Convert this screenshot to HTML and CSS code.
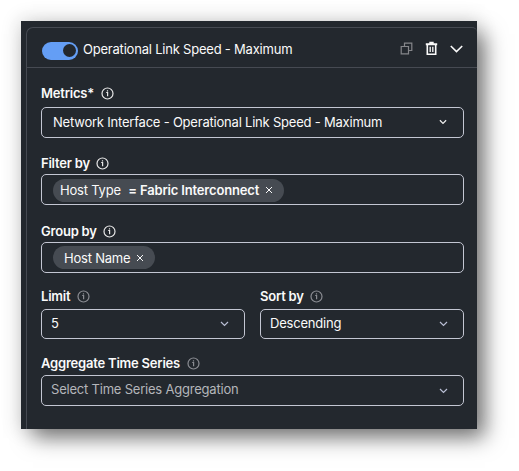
FILE: index.html
```html
<!DOCTYPE html>
<html lang="en">
<head>
<meta charset="utf-8">
<title>Metric query</title>
<link rel="stylesheet" href="styles.css">
</head>
<body>
<svg class="defs" aria-hidden="true">
  <symbol id="info" viewBox="0 0 13 13"><circle cx="6.5" cy="6.5" r="5.5"/><path d="M5.2 5.5h1.4v3.8M6.5 3.2v1.3"/></symbol>
  <symbol id="chevron" viewBox="0 0 9 6"><path d="M1 1l3.5 3.5L8 1"/></symbol>
  <symbol id="close" viewBox="0 0 8 8"><path d="M1 1l6 6M7 1l-6 6"/></symbol>
</svg>
<main class="panel">
  <section class="card">
    <header class="card-header">
      <span class="toggle"><span class="knob"></span></span>
      <h1 class="title">Operational Link Speed - Maximum</h1>
      <svg class="copy" viewBox="0 0 13 13"><path d="M4.5 4V1.2h7.3v7.3H9M1.2 4.5h7.3v7.3H1.2z"/></svg>
      <svg class="trash" viewBox="0 0 13 15"><path class="lid" d="M.8 3.3h11.4M4.3 1.8h4.4"/><path d="M2.3 4v9.2h8.4V4"/><path class="slots" d="M5.2 5.7v5.3M7.8 5.7v5.3"/></svg>
      <svg class="expand" viewBox="0 0 13 8"><path d="M.8 1l5.7 5.6L12.2 1"/></svg>
    </header>
    <form class="fields">
      <div class="field metrics">
        <div class="label"><span>Metrics*</span><svg class="info"><use href="#info"/></svg></div>
        <div class="box wide-pad"><span>Network Interface - Operational Link Speed - Maximum</span><svg class="chevron bright" viewBox="0 0 9 6"><use href="#chevron"/></svg></div>
      </div>
      <div class="field filter">
        <div class="label"><span>Filter by</span><svg class="info"><use href="#info"/></svg></div>
        <div class="box chips"><div class="chip chip-filter"><span>Host Type</span><b class="value">= Fabric Interconnect</b><svg class="close"><use href="#close"/></svg></div></div>
      </div>
      <div class="field group">
        <div class="label"><span>Group by</span><svg class="info"><use href="#info"/></svg></div>
        <div class="box chips"><div class="chip chip-group"><span>Host Name</span><svg class="close"><use href="#close"/></svg></div></div>
      </div>
      <div class="pair">
        <div class="field">
          <div class="label"><span>Limit</span><svg class="info dim"><use href="#info"/></svg></div>
          <div class="box"><span>5</span><svg class="chevron"><use href="#chevron"/></svg></div>
        </div>
        <div class="field">
          <div class="label"><span>Sort by</span><svg class="info dim"><use href="#info"/></svg></div>
          <div class="box"><span>Descending</span><svg class="chevron"><use href="#chevron"/></svg></div>
        </div>
      </div>
      <div class="field aggregate">
        <div class="label"><span>Aggregate Time Series</span><svg class="info dim"><use href="#info"/></svg></div>
        <div class="box placeholder"><span>Select Time Series Aggregation</span><svg class="chevron"><use href="#chevron"/></svg></div>
      </div>
    </form>
  </section>
</main>
</body>
</html>
```
FILE: styles.css
```css
* { box-sizing: border-box; }
body {
  margin: 0;
  padding: 21px;
  height: 471px;
  overflow: hidden;
  background: #fff;
  color: #fafafa;
  font: 13px/16px Inter, "Liberation Sans", sans-serif;
  letter-spacing: -.21px;
}
svg { fill: none; stroke: currentColor; flex: none; }
.defs { position: absolute; width: 0; height: 0; }
.panel {
  width: 456px;
  height: 408px;
  padding: 6px 0 0 5px;
  background: #23282e;
  box-shadow: 10px 11px 20px -2px rgba(0, 0, 0, .5), 0 0 18px 2px rgba(0, 0, 0, .14);
}
.card {
  height: 402px;
  border: 1px solid #464a52;
  border-width: 1px 0 0 1px;
  border-radius: 7px 5px 0 0;
}
.card-header {
  display: flex;
  align-items: center;
  height: 40px;
  padding: 2px 14.5px 0 15px;
  border-bottom: 1px solid #464a52;
}
.toggle {
  display: flex;
  justify-content: flex-end;
  align-items: center;
  width: 36px;
  height: 18px;
  margin: 4px 5px 0 0;
  padding-right: 2px;
  border-radius: 9px;
  background: #649ef5;
}
.knob { width: 13px; height: 13px; border-radius: 50%; background: #23282e; }
.title { flex: 1; margin: 0; font-size: 13px; font-weight: 400; white-space: nowrap; }
.copy { width: 13px; height: 13px; color: #85868a; margin-right: 12px; stroke-width: 1.2; }
.trash { width: 13px; height: 15px; stroke-width: 1.6; margin-right: 12px; }
.lid { stroke-width: 2; }
.slots { stroke-width: 1.3; }
.expand { width: 13px; height: 8px; stroke-width: 1.6; }
.fields { padding: 17px 13px 0 14px; }
.label { display: flex; align-items: center; height: 16px; font-weight: 600; white-space: nowrap; }
.info { width: 13px; height: 13px; margin: 1px 0 0 6.6px; color: #e8e8e8; stroke-width: 1.2; }
.dim { color: #8b8d93; }
.box {
  display: flex;
  align-items: center;
  justify-content: space-between;
  height: 31px;
  padding: 0 15px 3px 9px;
  border: 1px solid #c3c6d2;
  border-radius: 5px;
  white-space: nowrap;
}
.wide-pad { padding: 0 16px 1px 11px; }
.chevron { width: 9px; height: 6px; margin-top: 3px; color: #b9bed4; stroke-width: 1.2; }
.bright { width: 8px; margin-top: 0; color: #eee; stroke-width: 1.4; }
.metrics .box { margin-top: 6px; }
.filter { margin-top: 17px; }
.filter .box, .group .box { margin-top: 3px; }
.group { margin-top: 18px; }
.chips { justify-content: flex-start; padding: 0 11px; }
.chip { display: flex; align-items: center; height: 23px; border-radius: 12px; background: #464b52; }
.filter .chip { margin-top: 1px; }
.chip-filter { width: 231px; padding-left: 7px; }
.chip-group { width: 102px; padding-left: 11px; }
.value { margin-left: 7.5px; font-weight: 600; letter-spacing: -.17px; }
.close { width: 8px; height: 8px; margin-left: 6px; }
.pair { display: grid; grid-template-columns: 204px 204px; gap: 15px; margin-top: 15px; }
.pair .box { height: 30px; margin-top: 5px; }
.pair .label span { margin-top: -1px; }
.aggregate { margin-top: 16px; }
.aggregate .label span { margin-top: -1px; }
.aggregate .box { margin-top: 4px; }
.placeholder span { color: #b4b6ba; }
```
